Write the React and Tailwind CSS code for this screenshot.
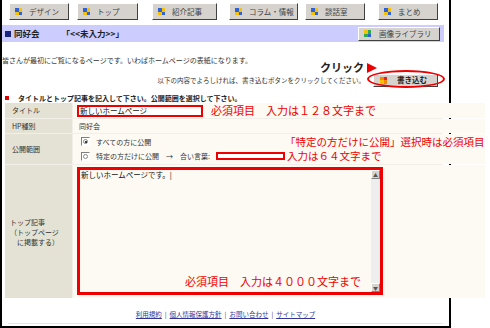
import React from 'react'

const jp = "font-['MS_PGothic','Noto_Sans_CJK_JP',sans-serif]"

function Squares({ colors }) {
  return (
    <span className='grid grid-cols-2 gap-0 w-[7px] h-[7px] shrink-0'>
      {colors.map((c, i) => (
        <span key={i} className='w-[3.5px] h-[3.5px]' style={{ background: c }} />
      ))}
    </span>
  )
}

const blueYellow = ['#2f62d6', '#f4c20d', '#f4c20d', '#2f62d6']

function NavButton({ label, className }) {
  return (
    <div className={'h-[17px] flex items-center gap-[7px] pl-[5px] bg-[#d6d3ce] border border-t-white border-l-white border-r-[#404040] border-b-[#404040] text-[7.5px] text-[#444] ' + className}>
      <Squares colors={blueYellow} />
      <span>{label}</span>
    </div>
  )
}

function Radio({ checked }) {
  return (
    <span className='w-[9px] h-[9px] border border-t-[#808080] border-l-[#808080] border-r-white border-b-white bg-white flex items-center justify-center shrink-0'>
      <span className='w-[5px] h-[5px] rounded-full border border-[#888] flex items-center justify-center'>
        {checked && <span className='w-[2px] h-[2px] rounded-full bg-black' />}
      </span>
    </span>
  )
}

export default function App() {
  return (
    <div className={'w-[490px] h-[328px] bg-white overflow-hidden text-[#222] ' + jp}>
      <div className='w-[451px] h-[328px] border-l-2 border-r-2 border-b-2 border-black relative'>
        {/* top nav */}
        <div className='h-[25px] flex items-start pt-[3px]'>
          <NavButton label='デザイン' className='ml-[7px] w-[60px]' />
          <NavButton label='トップ' className='ml-[8px] w-[61px]' />
          <NavButton label='紹介記事' className='ml-[14px] w-[65px]' />
          <NavButton label='コラム・情報' className='ml-[12px] w-[69px]' />
          <NavButton label='談話室' className='ml-[7px] w-[60px]' />
          <NavButton label='まとめ' className='ml-[13px] w-[60px]' />
        </div>

        {/* purple title bar */}
        <div className='w-[442px] h-[17px] bg-[#ccccff] flex items-center pl-[3px] pr-[4px]'>
          <span className='w-[6px] h-[6px] bg-[#1a237e] mr-[3px]' />
          <span className='text-[8.5px] font-bold text-[#222]'>同好会</span>
          <span className='ml-[22px] text-[8.5px] font-bold text-[#222]'>「&lt;&lt;未入力&gt;&gt;」</span>
          <div className='ml-auto w-[82px] h-[14px] flex items-center gap-[8px] pl-[5px] bg-[#d6d3ce] border border-t-white border-l-white border-r-[#404040] border-b-[#404040] text-[7.5px] text-[#444]'>
            <Squares colors={['#f4c20d', '#2fa84f', '#2fa84f', '#2f62d6']} />
            <span>画像ライブラリ</span>
          </div>
        </div>

        <p className='mt-[12px] leading-[12px] text-[7px] text-[#333]'>
          皆さんが最初にご覧になるページです。いわばホームページの表紙になります。
        </p>

        {/* write button row */}
        <div className='mt-[7px] h-[14px] flex items-center justify-end pr-[11px]'>
          <span className='text-[6.5px] leading-[8px] text-[#333] mr-[8px]'>以下の内容でよろしければ、書き込むボタンをクリックしてください。</span>
          <div className='w-[65px] h-[13px] flex items-center gap-[10px] pl-[6px] bg-[#d6d3ce] border border-t-white border-l-white border-r-[#404040] border-b-[#404040] text-[7.5px] font-bold text-[#222]'>
            <Squares colors={['#f08a00', '#e82020', '#f4c20d', '#f08a00']} />
            <span>書き込む</span>
          </div>
        </div>
        <div className='absolute left-[318px] top-[62px] flex items-center gap-[3px]'>
          <span className='text-[11px] leading-[11px] font-bold text-[#222]'>クリック</span>
          <svg width='10' height='10' viewBox='0 0 10 10'><polygon points='0,0 10,5 0,10' fill='#e00' /></svg>
        </div>
        <div className='absolute left-[365px] top-[70px] w-[78px] h-[18px] rounded-[50%] border-2 border-[#e00]' />

        {/* section header */}
        <div className='mt-[6px] h-[10px] flex items-center pl-[3px]'>
          <span className='w-[4px] h-[4px] bg-[#d00] mr-[9px]' />
          <span className='text-[7px] font-bold text-[#222]'>タイトルとトップ記事を記入して下さい。公開範囲を選択して下さい。</span>
        </div>

        {/* form table */}
        <div className='ml-[3px] w-[438px] grid grid-cols-[67px_1fr] gap-[1px] bg-[#f2efe8] text-[7px] text-[#333]'>
          <div className='h-[15px] bg-[#e3e2d4] flex items-center pl-[7px]'>タイトル</div>
          <div className='h-[15px] bg-[#fdfaf4] flex items-center pl-[4px]'>
            <div className='w-[126px] h-[12px] border-2 border-[#e00] bg-white flex items-center pl-[1px] text-[7.5px] text-[#111]'>新しいホームページ</div>
            <span className='ml-[8px] text-[11px] text-[#e00] whitespace-nowrap'>必須項目　入力は１２８文字まで</span>
          </div>

          <div className='h-[14px] bg-[#e3e2d4] flex items-center pl-[7px]'>HP種別</div>
          <div className='h-[14px] bg-[#fdfaf4] flex items-center pl-[6px]'>同好会</div>

          <div className='h-[30px] bg-[#e3e2d4] flex items-center pl-[7px]'>公開範囲</div>
          <div className='h-[30px] bg-[#fdfaf4] flex items-center pl-[8px]'>
            <div className='w-[206px] flex flex-col gap-[4px]'>
              <div className='flex items-center gap-[6px]'>
                <Radio checked />
                <span>すべての方に公開</span>
              </div>
              <div className='flex items-center gap-[6px]'>
                <Radio />
                <span className='whitespace-nowrap'>特定の方だけに公開　→　合い言葉:</span>
                <span className='w-[69px] h-[8px] border-2 border-[#e00] bg-white shrink-0' />
              </div>
            </div>
            <div className='flex flex-col text-[10.5px] leading-[14px] text-[#e00] whitespace-nowrap'>
              <span className='-ml-[2px]'>「特定の方だけに公開」選択時は必須項目</span>
              <span>入力は６４文字まで</span>
            </div>
          </div>

          <div className='h-[133px] bg-[#e3e2d4] flex flex-col justify-center pl-[5px] leading-[10px]'>
            <span>トップ記事</span>
            <span>（トップページ</span>
            <span>　に掲載する）</span>
          </div>
          <div className='h-[133px] bg-[#fdfaf4] pl-[4px] pt-[2px]'>
            <div className='w-[306px] h-[128px] border-[3px] border-[#e00] flex'>
              <div className='flex-1 flex flex-col justify-between pl-[1px]'>
                <span className='text-[7.5px] text-[#111] leading-[10px]'>新しいホームページです。|</span>
                <span className='self-end mr-[10px] mb-[3px] text-[11px] text-[#e00] whitespace-nowrap'>必須項目　入力は４０００文字まで</span>
              </div>
              <div className='w-[9px] bg-[#eeeeee] flex flex-col justify-between'>
                <span className='h-[9px] bg-[#d6d3ce] border border-t-white border-l-white border-r-[#808080] border-b-[#808080] text-[5px] leading-[7px] text-center text-[#555]'>▲</span>
                <span className='h-[9px] bg-[#d6d3ce] border border-t-white border-l-white border-r-[#808080] border-b-[#808080] text-[5px] leading-[7px] text-center text-[#555]'>▼</span>
              </div>
            </div>
          </div>
        </div>

        {/* footer */}
        <div className='mt-[11px] mx-[6px] pb-[4px] border-b border-[#e6e6f2] flex justify-center text-[6.5px] leading-[10px] text-[#333399]'>
          <span className='underline'>利用規約</span>
          <span className='mx-[3px]'>|</span>
          <span className='underline'>個人情報保護方針</span>
          <span className='mx-[3px]'>|</span>
          <span className='underline'>お問い合わせ</span>
          <span className='mx-[3px]'>|</span>
          <span className='underline'>サイトマップ</span>
        </div>
      </div>
    </div>
  )
}
